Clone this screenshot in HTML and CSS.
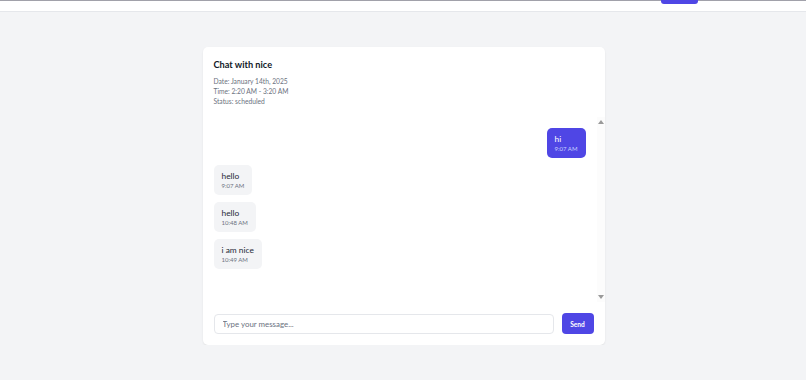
FILE: index.html
```html
<!DOCTYPE html>
<html lang="en">
<head>
<meta charset="UTF-8">
<title>Chat with nice</title>
<link rel="stylesheet" href="styles.css">
</head>
<body>

  <header class="topbar">
    <nav class="topbar-inner">
      <span class="topbar-btn"></span>
    </nav>
  </header>

  <main class="page">
    <section class="chat-card">
      <div class="chat-head">
        <h1>Chat with nice</h1>
        <p>Date: January 14th, 2025</p>
        <p>Time: 2:20 AM - 3:20 AM</p>
        <p>Status: scheduled</p>
      </div>

      <div class="chat-body">
        <div class="messages">
          <div class="msg mine">
            <div class="text">hi</div>
            <div class="time">9:07 AM</div>
          </div>
          <div class="msg">
            <div class="text">hello</div>
            <div class="time">9:07 AM</div>
          </div>
          <div class="msg">
            <div class="text">hello</div>
            <div class="time">10:48 AM</div>
          </div>
          <div class="msg">
            <div class="text">i am nice</div>
            <div class="time">10:49 AM</div>
          </div>
        </div>
        <div class="rail">
          <span class="arrow up"></span>
          <span class="arrow down"></span>
        </div>
      </div>

      <form class="composer">
        <input type="text" placeholder="Type your message...">
        <button type="button">Send</button>
      </form>
    </section>
  </main>

</body>
</html>
```

FILE: styles.css
```css
:root {
  --indigo: #4f46e5;
  --gris-fondo: #f3f4f6;
  --gris-borde: #e5e7eb;
  --texto: #1f2937;
  --texto-suave: #6b7280;
}
html, body {
  margin: 0;
  padding: 0;
  background: var(--gris-fondo);
  font-family: 'Lato', sans-serif;
  color: var(--texto);
}
.topbar {
  background: #fff;
  border-top: 1px solid #a1a1aa;
  border-bottom: 1px solid var(--gris-borde);
  height: 10px;
}
.topbar-inner {
  display: flex;
  justify-content: flex-end;
  padding-right: 108px;
}
.topbar-btn {
  display: block;
  width: 37px;
  height: 4px;
  margin-top: -1px;
  background: var(--indigo);
  border-radius: 0 0 3px 3px;
}
.page {
  padding: 35px 0 0 1px;
}
.chat-card {
  width: 402px;
  margin: 0 auto;
  background: #fff;
  border-radius: 5px;
  box-shadow: 0 1px 2px rgba(0,0,0,0.08);
}
.chat-head {
  padding: 10px 11px 11px;
}
.chat-head h1 {
  margin: 0 0 3px;
  font-size: 9.2px;
  line-height: 16px;
  font-weight: 700;
  color: #111827;
}
.chat-head p {
  margin: 0;
  font-size: 6.7px;
  line-height: 10px;
  color: var(--texto-suave);
}
.chat-body {
  display: flex;
}
.messages {
  flex: 1;
  height: 163px;
  padding: 11px;
  display: flex;
  flex-direction: column;
  gap: 7px;
}
.rail {
  width: 8px;
  display: flex;
  flex-direction: column;
  justify-content: space-between;
  align-items: center;
  padding: 3px 0;
  background: #fcfcfc;
}
.arrow {
  width: 0;
  height: 0;
  border-left: 3px solid transparent;
  border-right: 3px solid transparent;
}
.arrow.up {
  border-bottom: 4px solid #9a9a9a;
}
.arrow.down {
  border-top: 4px solid #9a9a9a;
}
.msg {
  align-self: flex-start;
  background: var(--gris-fondo);
  border-radius: 5px;
  padding: 5px 8px;
}
.msg.mine {
  align-self: flex-end;
  background: var(--indigo);
  color: #fff;
}
.msg .text {
  font-size: 8.4px;
  line-height: 12px;
}
.msg .time {
  font-size: 6px;
  line-height: 8px;
  color: var(--texto-suave);
}
.msg.mine .time {
  color: #c7d2fe;
}
.composer {
  display: flex;
  gap: 8px;
  padding: 11px;
}
.composer input {
  flex: 1;
  height: 20px;
  margin-top: 1px;
  box-sizing: border-box;
  border: 1px solid var(--gris-borde);
  border-radius: 4px;
  padding: 0 8px;
  font-family: inherit;
  font-size: 7.9px;
  outline: none;
}
.composer input::placeholder {
  color: var(--texto-suave);
}
.composer button {
  width: 32px;
  height: 21px;
  border: 0;
  border-radius: 4px;
  background: var(--indigo);
  color: #fff;
  font-family: inherit;
  font-size: 6.6px;
  font-weight: 700;
}
```
